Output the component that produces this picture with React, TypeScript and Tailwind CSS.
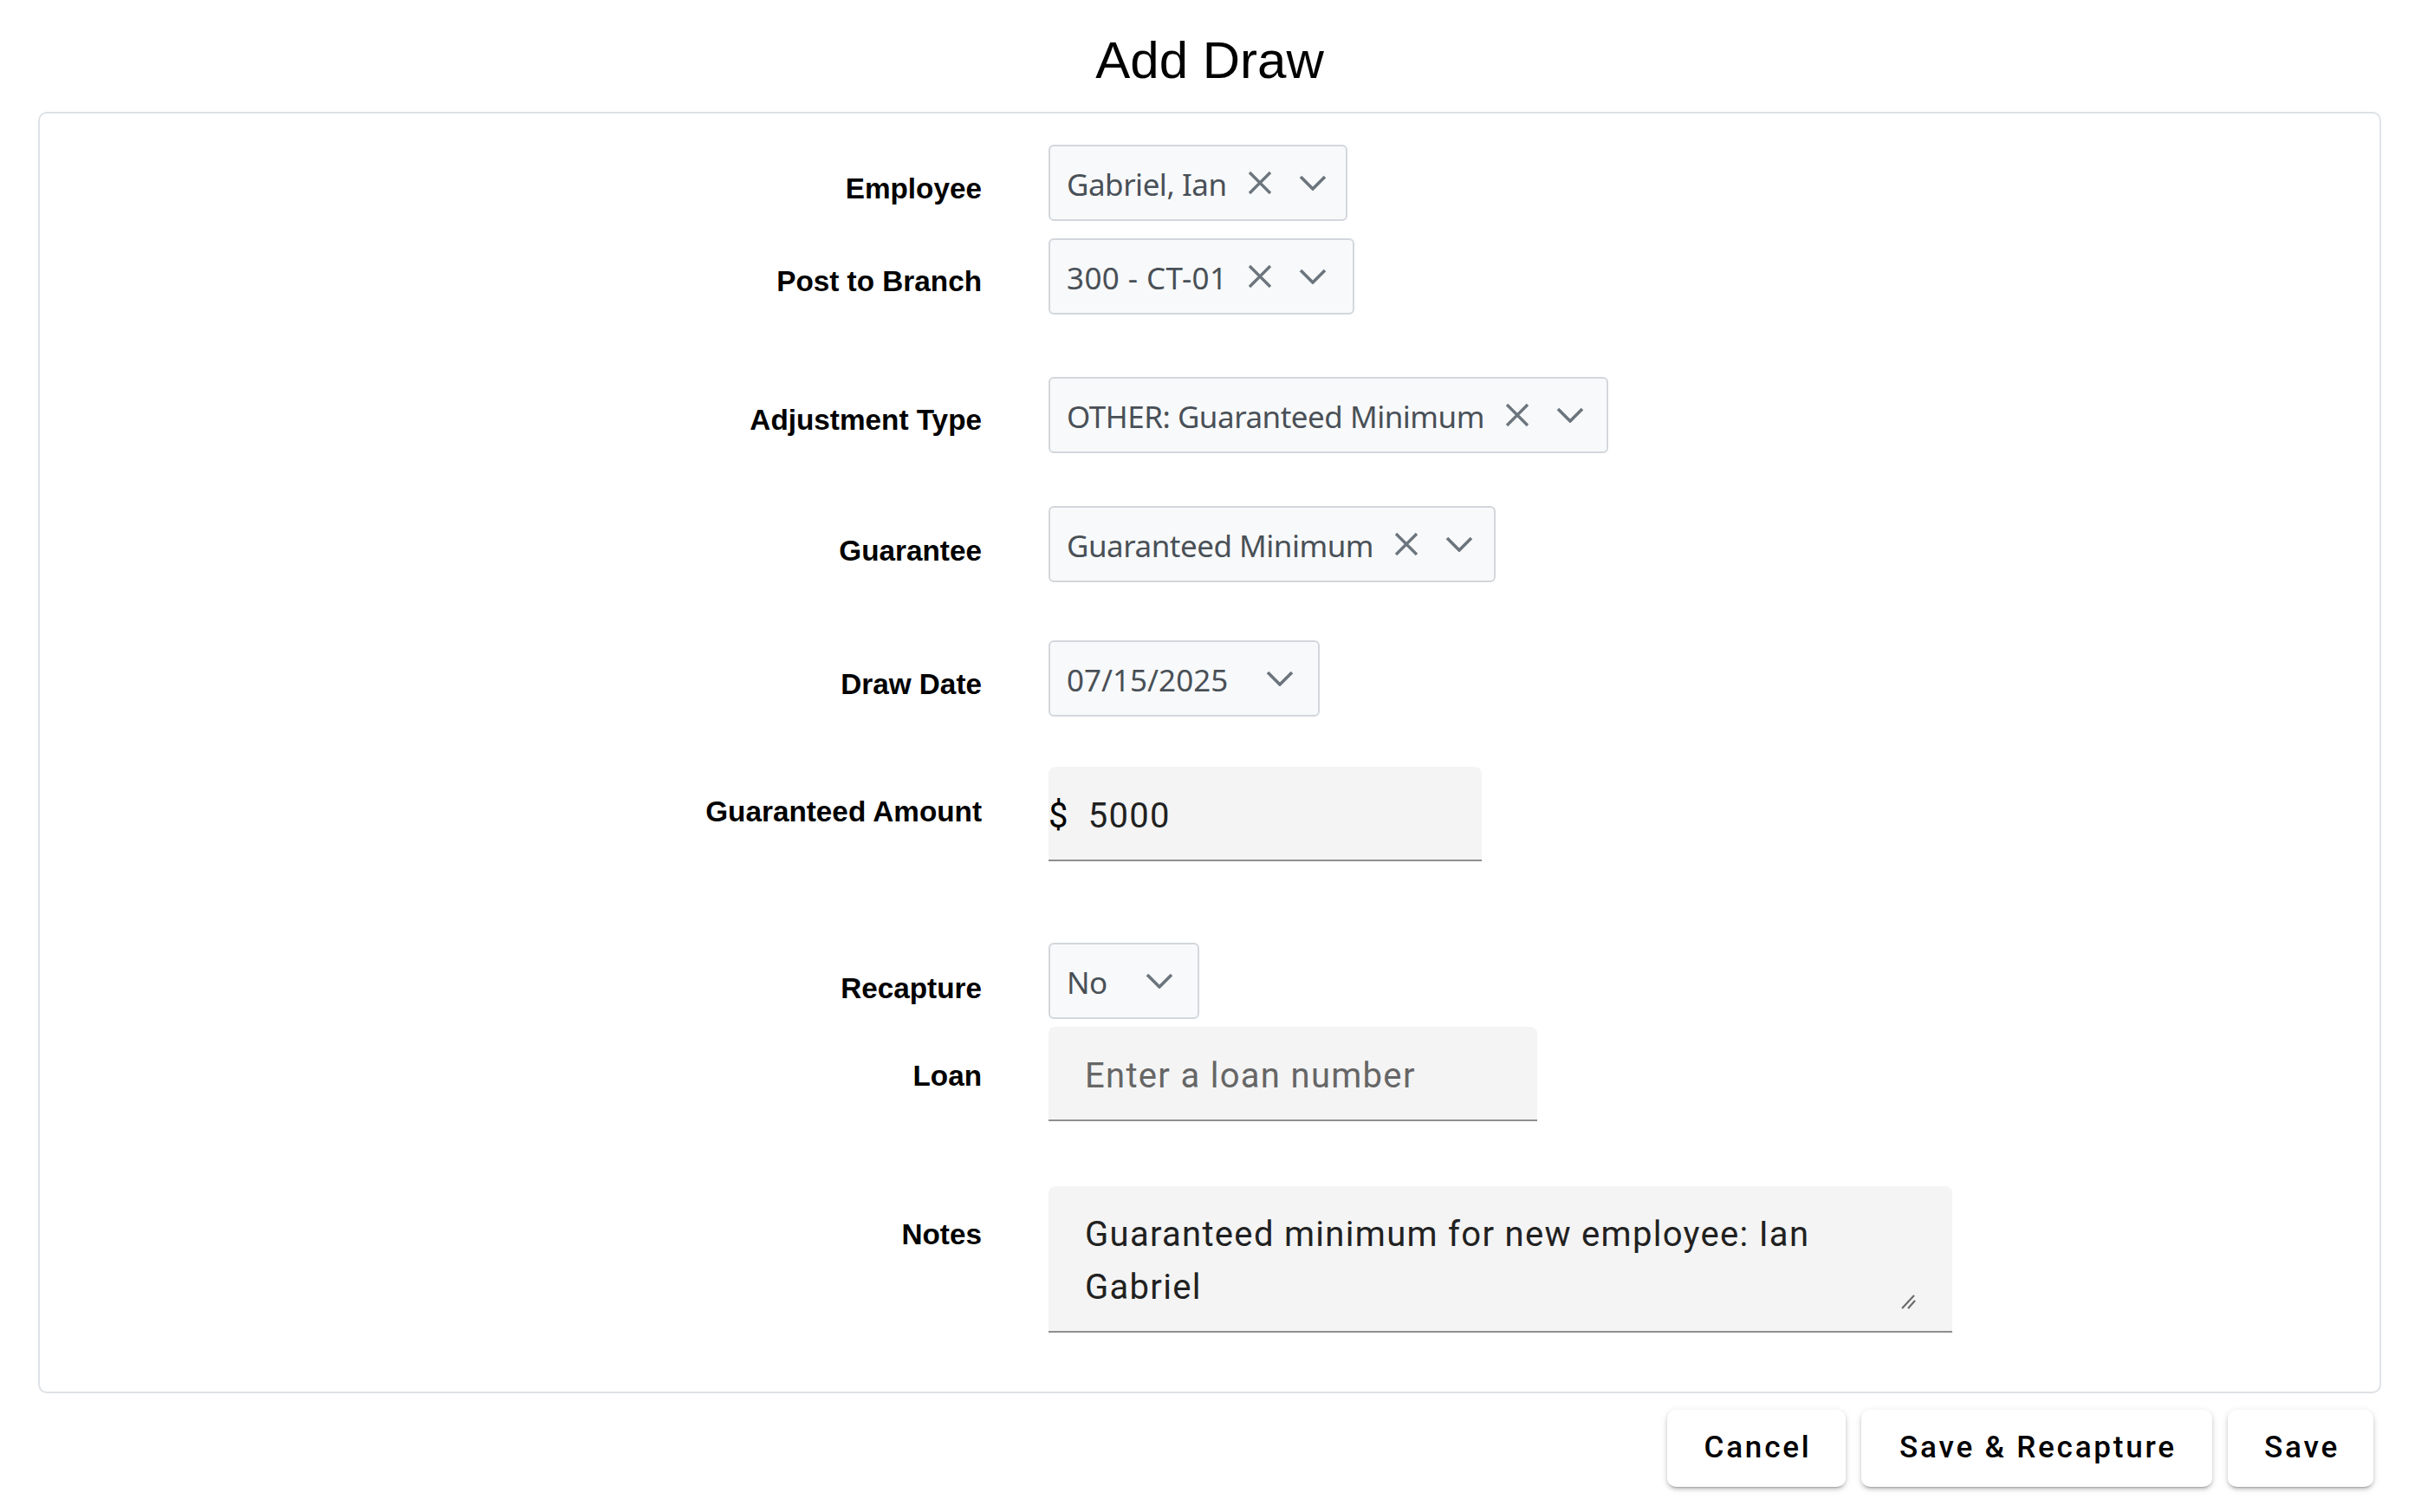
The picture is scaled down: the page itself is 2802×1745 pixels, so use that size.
import React from "react";

const XIcon = () => (
  <svg width="28" height="28" viewBox="0 0 28 28" className="shrink-0">
    <path d="M2 2L26 26M26 2L2 26" stroke="#6c757d" strokeWidth="3.3" fill="none" />
  </svg>
);

const Chevron = () => (
  <svg width="32" height="18" viewBox="0 0 32 18" className="shrink-0">
    <path d="M2 2L16 16L30 2" stroke="#6c757d" strokeWidth="3.6" fill="none" />
  </svg>
);

function Select({
  value,
  clear,
  width,
  track = "tracking-[-0.5px]",
}: {
  value: string;
  clear: boolean;
  width: string;
  track?: string;
}) {
  return (
    <div
      className={`flex h-[88px] items-center rounded-[6px] border-2 border-[#d3d7dc] bg-[#f8f9fa] pl-[19px] pr-[28px] ${width}`}
    >
      <span
        className={`mt-[4px] whitespace-nowrap font-['Noto_Sans','Open_Sans',sans-serif] text-[35px] text-[#495057] ${track}`}
      >
        {value}
      </span>
      {clear ? (
        <>
          <span className="ml-[24px] flex">
            <XIcon />
          </span>
          <span className="ml-[31px] flex">
            <Chevron />
          </span>
        </>
      ) : (
        <span className="ml-auto flex">
          <Chevron />
        </span>
      )}
    </div>
  );
}

function Label({ text, pt }: { text: string; pt: string }) {
  return (
    <div
      className={`w-[1087px] shrink-0 text-right font-['Liberation_Sans',Arial,sans-serif] text-[33.3px] font-bold leading-[40px] text-black ${pt}`}
    >
      {text}
    </div>
  );
}

export default function App() {
  return (
    <div className="min-h-screen bg-white pl-[44px] pr-[54px] pt-[36px]">
      <h1 className="text-center font-['Liberation_Sans',Arial,sans-serif] text-[60px] font-normal leading-[68px] text-black">
        Add Draw
      </h1>

      <div className="mt-[25px] rounded-[10px] border-2 border-[#dee2e6] pb-[68px] pt-[36px]">
        <div className="flex">
          <Label text="Employee" pt="pt-[31px]" />
          <div className="ml-[77px]">
            <Select value="Gabriel, Ian" clear width="w-[345px]" />
          </div>
        </div>

        <div className="mt-[20px] flex">
          <Label text="Post to Branch" pt="pt-[30px]" />
          <div className="ml-[77px]">
            <Select value="300 - CT-01" clear width="w-[353px]" track="tracking-[0.4px]" />
          </div>
        </div>

        <div className="mt-[72px] flex">
          <Label text="Adjustment Type" pt="pt-[30px]" />
          <div className="ml-[77px]">
            <Select value="OTHER: Guaranteed Minimum" clear width="w-[646px]" />
          </div>
        </div>

        <div className="mt-[61px] flex">
          <Label text="Guarantee" pt="pt-[32px]" />
          <div className="ml-[77px]">
            <Select value="Guaranteed Minimum" clear width="w-[516px]" />
          </div>
        </div>

        <div className="mt-[67px] flex">
          <Label text="Draw Date" pt="pt-[31px]" />
          <div className="ml-[77px]">
            <Select value="07/15/2025" clear={false} width="w-[313px]" track="tracking-[0px]" />
          </div>
        </div>

        <div className="mt-[58px] flex">
          <Label text="Guaranteed Amount" pt="pt-[32px]" />
          <div className="ml-[77px]">
            <div className="flex h-[109px] w-[500px] items-center rounded-t-[8px] border-b-2 border-[#8f8f8f] bg-[#f4f4f4] font-['Roboto',sans-serif] text-[40px] tracking-[1.3px] text-[#212121]">
              <span className="mt-[6px] text-black">$</span>
              <span className="ml-[22px] mt-[6px]">5000</span>
            </div>
          </div>
        </div>

        <div className="mt-[94px] flex">
          <Label text="Recapture" pt="pt-[33px]" />
          <div className="ml-[77px]">
            <Select value="No" clear={false} width="w-[174px]" />
          </div>
        </div>

        <div className="mt-[9px] flex">
          <Label text="Loan" pt="pt-[37px]" />
          <div className="ml-[77px]">
            <div className="flex h-[109px] w-[564px] items-center rounded-t-[8px] border-b-2 border-[#8f8f8f] bg-[#f4f4f4] pl-[42px] pr-[20px]">
              <input
                className="mt-[7px] w-full bg-transparent font-['Roboto',sans-serif] text-[40px] tracking-[1.3px] text-[#212121] outline-none placeholder:text-[#666666]"
                placeholder="Enter a loan number"
              />
            </div>
          </div>
        </div>

        <div className="mt-[75px] flex">
          <Label text="Notes" pt="pt-[36px]" />
          <div className="ml-[77px]">
            <div className="relative h-[169px] w-[1043px] rounded-t-[8px] border-b-2 border-[#8f8f8f] bg-[#f4f4f4] pb-[20px] pl-[42px] pr-[40px] pt-[25px]">
              <textarea
                className="block h-[122px] w-full resize-none overflow-hidden bg-transparent font-['Roboto',sans-serif] text-[40px] leading-[61px] tracking-[1.3px] text-[#212121] outline-none"
                defaultValue="Guaranteed minimum for new employee: Ian Gabriel"
              />
              <svg
                width="20"
                height="18"
                viewBox="0 0 20 18"
                className="absolute bottom-[25px] right-[40px]"
              >
                <path d="M2 17L16 2" stroke="#6b6b6b" strokeWidth="2.2" fill="none" />
                <path d="M9 17L17 8" stroke="#6b6b6b" strokeWidth="2.2" fill="none" />
              </svg>
            </div>
          </div>
        </div>
      </div>

      <div className="mt-[19px] flex justify-end gap-[18px] pr-[9px]">
        {[
          { t: "Cancel", w: "w-[206px]" },
          { t: "Save & Recapture", w: "w-[405px]" },
          { t: "Save", w: "w-[168px]" },
        ].map((b) => (
          <button
            key={b.t}
            className={`flex h-[89px] items-center justify-center rounded-[10px] bg-white pl-[3px] font-['Roboto',sans-serif] text-[35px] font-medium tracking-[2.8px] text-black shadow-[0_4px_2px_-3px_rgba(0,0,0,0.22),0_3px_4px_0_rgba(0,0,0,0.14),0_2px_9px_0_rgba(0,0,0,0.12)] ${b.w}`}
          >
            {b.t}
          </button>
        ))}
      </div>
    </div>
  );
}
